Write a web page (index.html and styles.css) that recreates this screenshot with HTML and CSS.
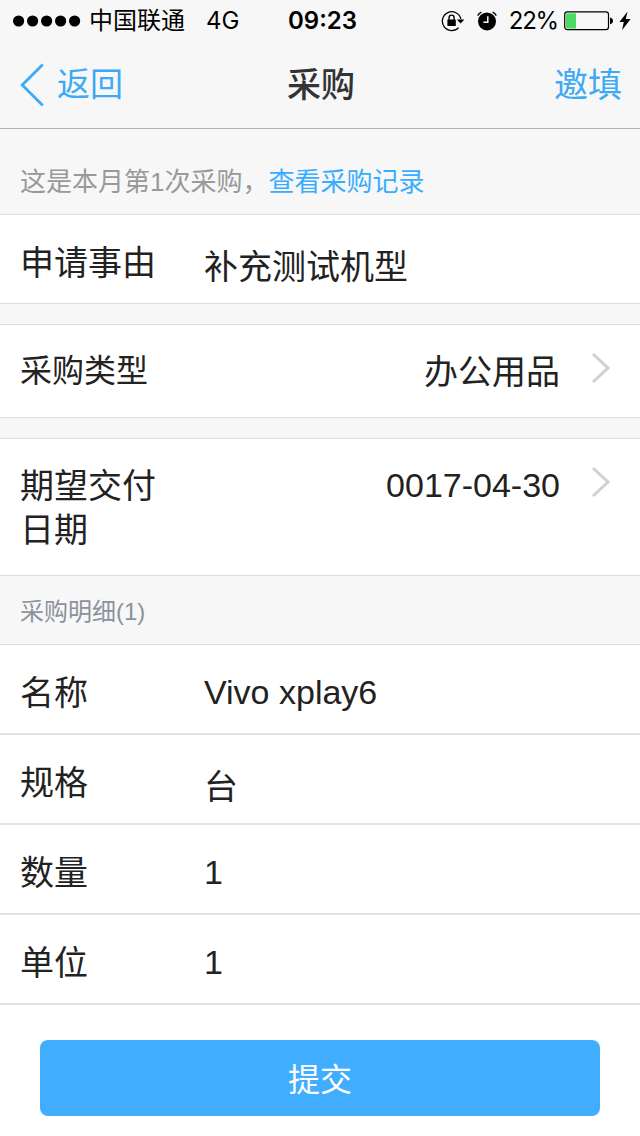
FILE: index.html
```html
<!DOCTYPE html>
<html lang="zh-CN">
<head>
    <meta charset="UTF-8">
    <meta name="viewport" content="width=device-width, initial-scale=1.0">
    <title>采购</title>
    <link rel="stylesheet" href="styles.css">
</head>
<body>
    <!-- 状态栏 -->
    <div class="status-bar">
        <div class="status-left">
            <svg class="signal" width="68" height="12" viewBox="0 0 68 12">
                <circle cx="5.6" cy="6" r="5.6"/>
                <circle cx="19.6" cy="6" r="5.6"/>
                <circle cx="33.6" cy="6" r="5.6"/>
                <circle cx="47.6" cy="6" r="5.6"/>
                <circle cx="61.6" cy="6" r="5.6"/>
            </svg>
            <span class="carrier">中国联通</span>
            <span class="network">4G</span>
        </div>
        <div class="status-time">09:23</div>
        <div class="status-right">
            <svg class="icon-lock" width="24" height="22" viewBox="0 0 24 22">
                <path d="M17.6 17.6A9.4 9.4 0 1 1 19.9 9" fill="none" stroke="#000" stroke-width="1.3"/>
                <path d="M15.8 9.4h7.6l-3.8 4.2z"/>
                <rect x="6.4" y="9.6" width="8.4" height="6.4" rx="0.6"/>
                <path d="M8.1 10V7.6a2.5 2.5 0 0 1 5 0V10" fill="none" stroke="#000" stroke-width="1.4"/>
            </svg>
            <svg class="icon-alarm" width="20" height="20" viewBox="0 0 20 20">
                <circle cx="10" cy="10.4" r="9"/>
                <path d="M10.8 5.2v6H6.4" fill="none" stroke="#f7f7f7" stroke-width="1.5"/>
                <path d="M0.7 4.6A9 9 0 0 1 4.4 1.2M15.6 1.2A9 9 0 0 1 19.3 4.6" fill="none" stroke="#000" stroke-width="1.4"/>
            </svg>
            <span class="percent">22%</span>
            <svg class="icon-battery" width="50" height="20" viewBox="0 0 50 20">
                <rect x="0.7" y="0.9" width="43.8" height="17.8" rx="2.6" fill="none" stroke="#000" stroke-width="1.2"/>
                <rect x="2" y="2.2" width="10" height="15.2" rx="1" fill="#4cd964"/>
                <path d="M46 6.4c4 .8 4 6 0 6.8z"/>
            </svg>
            <svg class="icon-bolt" width="12" height="20" viewBox="0 0 12 20">
                <path d="M8.6 0.4L0.4 11h4.4L3 19.2L11.6 8H6.8z"/>
            </svg>
        </div>
    </div>

    <!-- 导航栏 -->
    <div class="nav-bar">
        <a class="nav-back">
            <svg width="25" height="44" viewBox="0 0 25 44">
                <path d="M22.8 1.6L2.2 22L22.8 42.4" fill="none" stroke="#3ea9f5" stroke-width="2.8"/>
            </svg>
            <span>返回</span>
        </a>
        <h1 class="nav-title">采购</h1>
        <a class="nav-action">邀填</a>
    </div>

    <p class="hint">这是本月第1次采购，<a class="hint-link">查看采购记录</a></p>

    <div class="cell cell-reason">
        <label class="cell-label">申请事由</label>
        <div class="cell-value">补充测试机型</div>
    </div>

    <div class="cell cell-type">
        <label class="cell-label">采购类型</label>
        <div class="cell-value">办公用品</div>
        <svg class="arrow" width="20" height="32" viewBox="0 0 20 32">
            <path d="M2 2L17 16L2 30" fill="none" stroke="#d0d0d0" stroke-width="3"/>
        </svg>
    </div>

    <div class="cell cell-date">
        <label class="cell-label">期望交付日期</label>
        <div class="cell-value">0017-04-30</div>
        <svg class="arrow" width="20" height="32" viewBox="0 0 20 32">
            <path d="M2 2L17 16L2 30" fill="none" stroke="#d0d0d0" stroke-width="3"/>
        </svg>
    </div>

    <h2 class="section-title">采购明细(1)</h2>

    <div class="detail">
        <div class="detail-row">
            <label class="cell-label">名称</label>
            <div class="detail-value">Vivo xplay6</div>
        </div>
        <div class="detail-row">
            <label class="cell-label">规格</label>
            <div class="detail-value detail-value-cn">台</div>
        </div>
        <div class="detail-row">
            <label class="cell-label">数量</label>
            <div class="detail-value">1</div>
        </div>
        <div class="detail-row">
            <label class="cell-label">单位</label>
            <div class="detail-value">1</div>
        </div>
    </div>

    <div class="footer">
        <button class="submit-btn">提交</button>
    </div>
</body>
</html>
```

FILE: styles.css
```css
* {
    box-sizing: border-box;
}

body {
    margin: 0;
    background-color: #f7f7f7;
    color: #222;
    font-family: "Liberation Sans", "Noto Sans CJK SC", sans-serif;
    font-size: 34px;
    height: 1136px;
    display: flex;
    flex-direction: column;
    overflow: hidden;
}

svg {
    display: block;
    flex: none;
}

/* 状态栏 */
.status-bar {
    display: grid;
    grid-template-columns: 1fr auto 1fr;
    align-items: center;
    height: 40px;
    padding: 1px 9px 0 13px;
    color: #000;
    font-family: Inter, "Noto Sans CJK SC", sans-serif;
    font-size: 24px;
    line-height: 40px;
}

.status-left,
.status-right {
    display: flex;
    align-items: center;
}

.status-right {
    justify-content: flex-end;
}

.carrier {
    margin-left: 8px;
}

.network {
    margin-left: 21px;
}

.status-time {
    padding-left: 1px;
    font-weight: 600;
}

.icon-alarm {
    margin-left: 12px;
}

.percent {
    margin: 0 6px 0 12px;
    letter-spacing: -1.2px;
}

.icon-bolt {
    margin-left: 5px;
}

/* 导航栏 */
.nav-bar {
    display: grid;
    grid-template-columns: 1fr auto 1fr;
    align-items: center;
    height: 89px;
    padding: 2px 18px 0 20px;
    border-bottom: 1px solid #b2b2b2;
    line-height: 50px;
}

.nav-back {
    display: flex;
    align-items: center;
    gap: 12px;
    color: #3ea9f5;
    font-size: 33px;
}

.nav-title {
    margin: 0;
    color: #333;
    font-size: 34px;
    font-weight: 500;
}

.nav-action {
    color: #3ea9f5;
    text-align: right;
}

.hint {
    margin: 0;
    height: 85px;
    padding: 33px 20px 0;
    color: #999;
    font-size: 26px;
    line-height: 40px;
}

.hint-link {
    color: #38adff;
}

/* 表单项 */
.cell {
    display: flex;
    align-items: flex-start;
    flex: none;
    background-color: #fff;
    border-top: 1px solid #ddd;
    border-bottom: 1px solid #ddd;
    padding: 0 29px 0 20px;
    line-height: 44px;
}

.cell + .cell {
    margin-top: 20px;
}

.cell-label {
    width: 148px;
    flex: none;
}

.cell-reason {
    height: 90px;
    padding-top: 26px;
}

.cell-reason .cell-value {
    margin: 4px 0 0 36px;
}

.cell-type {
    height: 94px;
    padding-top: 24px;
}

.cell-type .cell-label {
    font-size: 32px;
}

.cell-type .cell-value,
.cell-date .cell-value {
    flex: 1;
    margin-right: 31px;
    text-align: right;
}

.cell-type .cell-value {
    padding-top: 1px;
}

.cell-date {
    height: 138px;
    padding-top: 24px;
}

.cell-date .cell-label {
    padding-top: 1px;
}

.arrow {
    margin-top: 3px;
}

.section-title {
    margin: 0;
    height: 68px;
    flex: none;
    padding: 16px 20px 0;
    color: #8c929c;
    font-size: 24px;
    font-weight: 400;
    line-height: 40px;
}

/* 采购明细 */
.detail {
    background-color: #fff;
    border-top: 1px solid #ddd;
}

.detail-row {
    display: flex;
    height: 90px;
    padding: 25px 20px 0;
    border-bottom: 2px solid #e2e2e2;
    line-height: 44px;
}

.detail-row .cell-label {
    padding-top: 1px;
}

.detail-value {
    margin-left: 36px;
}

.detail-value-cn {
    padding-top: 5px;
}

.footer {
    flex: 1;
    padding: 35px 40px 20px;
    background-color: #fff;
}

.submit-btn {
    display: block;
    width: 100%;
    height: 76px;
    padding: 0 0 2px;
    border: none;
    border-radius: 8px;
    background-color: #40adff;
    color: #fff;
    font-family: inherit;
    font-size: 32px;
}
```
